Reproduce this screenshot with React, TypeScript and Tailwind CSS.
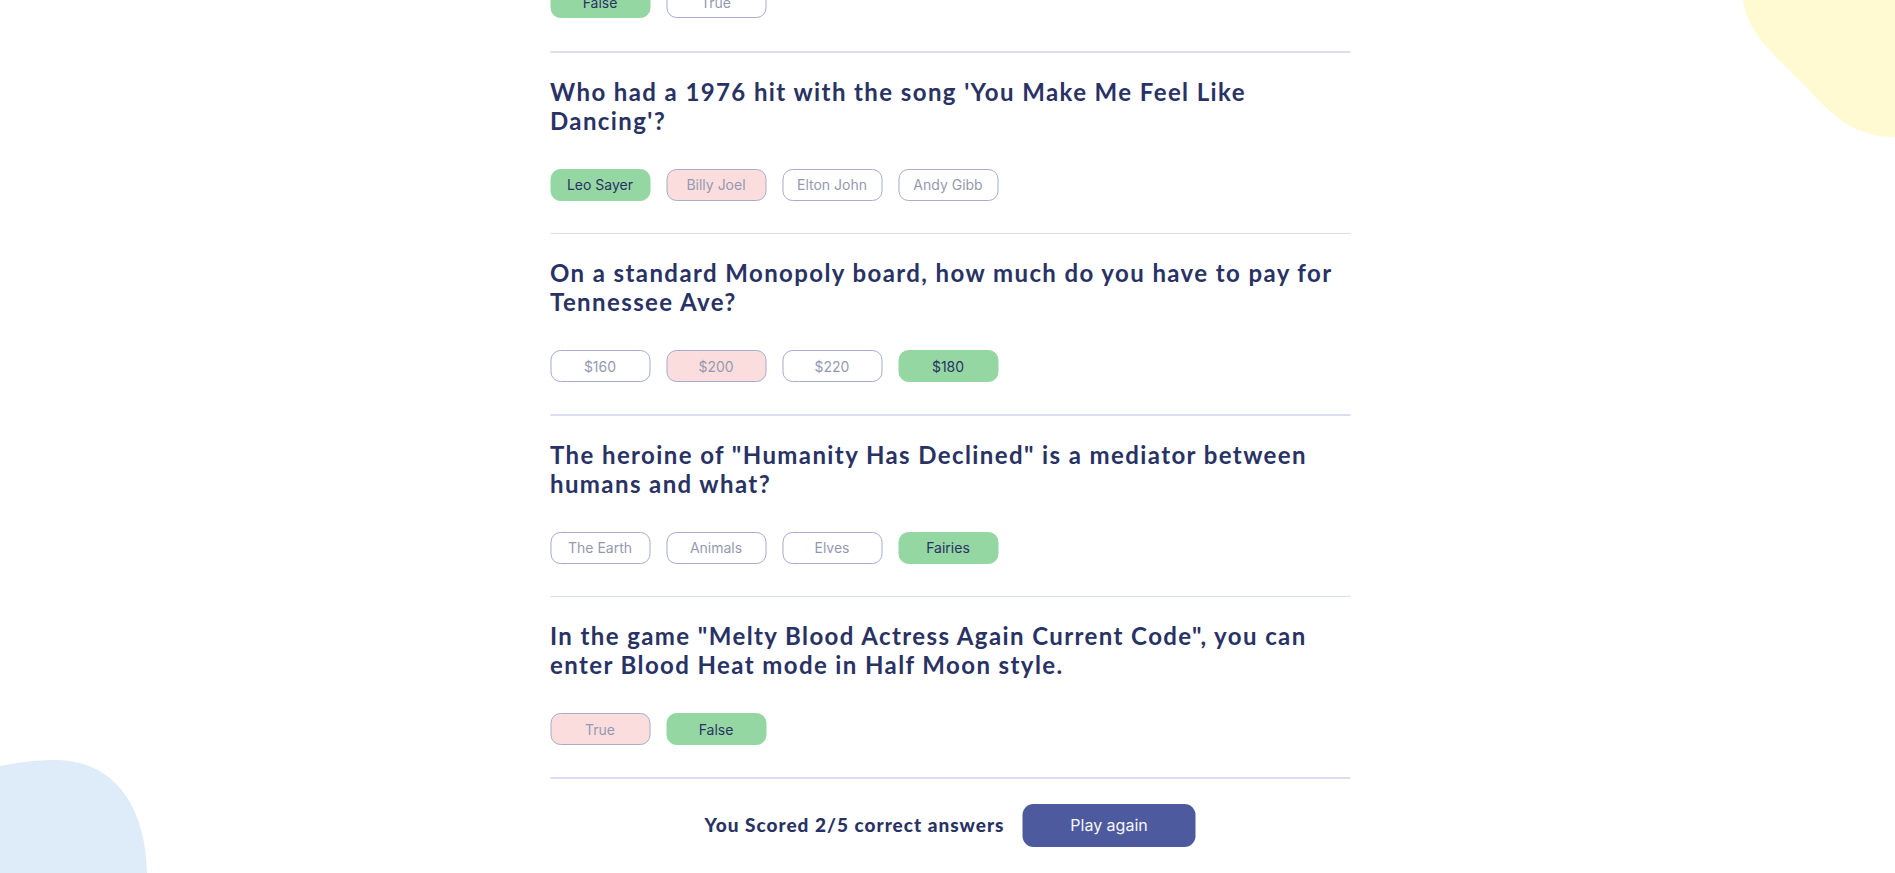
import React from 'react'

type Status = 'correct' | 'wrong' | 'idle'

type Question = {
  question?: string
  answers: { text: string; status: Status }[]
}

const questions: Question[] = [
  {
    answers: [
      { text: 'False', status: 'correct' },
      { text: 'True', status: 'idle' },
    ],
  },
  {
    question: "Who had a 1976 hit with the song 'You Make Me Feel Like Dancing'?",
    answers: [
      { text: 'Leo Sayer', status: 'correct' },
      { text: 'Billy Joel', status: 'wrong' },
      { text: 'Elton John', status: 'idle' },
      { text: 'Andy Gibb', status: 'idle' },
    ],
  },
  {
    question: 'On a standard Monopoly board, how much do you have to pay for Tennessee Ave?',
    answers: [
      { text: '$160', status: 'idle' },
      { text: '$200', status: 'wrong' },
      { text: '$220', status: 'idle' },
      { text: '$180', status: 'correct' },
    ],
  },
  {
    question: 'The heroine of "Humanity Has Declined" is a mediator between humans and what?',
    answers: [
      { text: 'The Earth', status: 'idle' },
      { text: 'Animals', status: 'idle' },
      { text: 'Elves', status: 'idle' },
      { text: 'Fairies', status: 'correct' },
    ],
  },
  {
    question:
      'In the game "Melty Blood Actress Again Current Code", you can enter Blood Heat mode in Half Moon style.',
    answers: [
      { text: 'True', status: 'wrong' },
      { text: 'False', status: 'correct' },
    ],
  },
]

const heading = { fontFamily: 'Lato, "Liberation Sans", sans-serif' }
const body = { fontFamily: 'Inter, "Liberation Sans", sans-serif' }

function AnswerButton({ text, status }: { text: string; status: Status }) {
  const cls =
    status === 'correct'
      ? 'border-[#94D7A2] bg-[#94D7A2] text-[#293264]'
      : status === 'wrong'
        ? 'border-[#4D5B9E] bg-[#F8BCBC] text-[#293264] opacity-50'
        : 'border-[#4D5B9E] bg-white text-[#293264] opacity-50'
  return (
    <button
      className={`h-[32px] min-w-[100px] rounded-[10px] border px-[14px] text-[14px] ${cls}`}
      style={body}
    >
      {text}
    </button>
  )
}

export default function App() {
  return (
    <div className="relative h-[873px] overflow-hidden bg-white">
      <svg className="absolute left-0 top-0" width="1895" height="873" viewBox="0 0 1895 873">
        <path
          d="M1743,0 C1746,22 1758,38 1775,56 L1805,86 C1830,112 1850,137 1895,137 L1895,0 Z"
          fill="#FFFAD1"
        />
        <path d="M0,766 C20,762 38,760 55,760 C110,760 145,800 147,873 L0,873 Z" fill="#DEEBF8" />
      </svg>

      <main className="relative mx-auto w-[800px] translate-x-[2.5px]">
        {questions.map((q, i) => (
          <section key={i}>
            <div className={i === 0 ? 'mt-[-14px] pb-[33px]' : 'pt-[24px] pb-[32px]'}>
              {q.question && (
                <h2
                  className="mb-[34px] text-[24px] font-bold leading-[29px] tracking-[1.4px] text-[#293264]"
                  style={heading}
                >
                  {q.question}
                </h2>
              )}
              <div className="flex gap-[16px]">
                {q.answers.map((a) => (
                  <AnswerButton key={a.text} text={a.text} status={a.status} />
                ))}
              </div>
            </div>
            <div className="h-[1.5px] bg-[#DBDEF0]" />
          </section>
        ))}

        <div className="flex items-center justify-center gap-[18px] pt-[25px]">
          <p className="text-[19px] font-black tracking-[1px] text-[#293264]" style={heading}>
            You Scored 2/5 correct answers
          </p>
          <button
            className="h-[43px] w-[173px] rounded-[11px] bg-[#4D5B9E] text-[16px] text-[#F5F7FB]"
            style={body}
          >
            Play again
          </button>
        </div>
      </main>
    </div>
  )
}
